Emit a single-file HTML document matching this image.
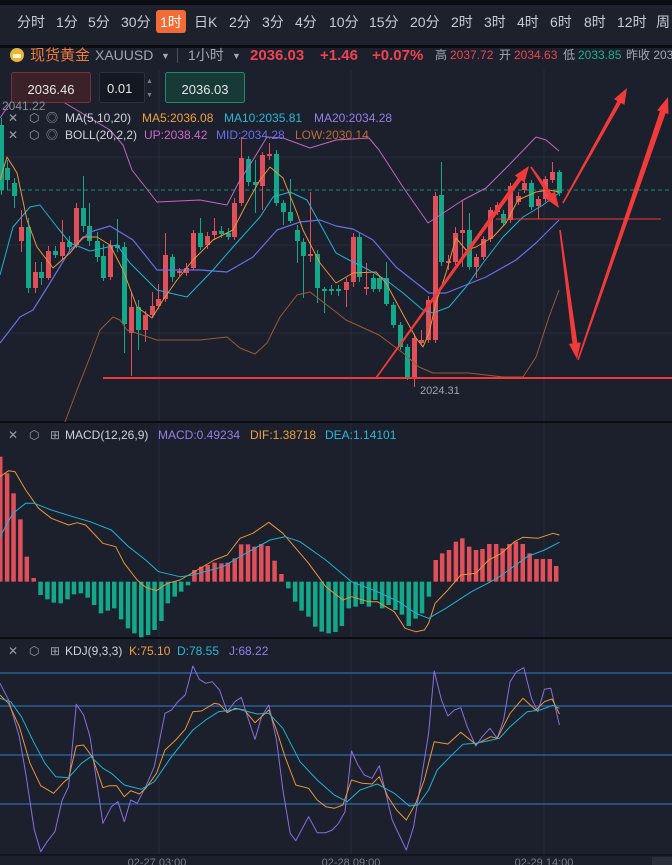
<!DOCTYPE html>
<html><head><meta charset="utf-8">
<style>
html,body{margin:0;padding:0;background:#1b202c;width:672px;height:865px;overflow:hidden;font-family:"Liberation Sans","Noto Sans CJK SC",sans-serif;}
svg{position:absolute;left:0;top:0}
</style></head>
<body>
<svg id="s" width="672" height="865" xmlns="http://www.w3.org/2000/svg" font-family="Liberation Sans, Noto Sans CJK SC, sans-serif">
<rect x="0" y="0" width="672" height="865" fill="#1b202c"/>
<rect x="0" y="0" width="672" height="5" fill="#0b0d12"/>
<rect x="0" y="5" width="672" height="41" fill="#1c212b"/>
<rect x="0" y="45" width="672" height="3" fill="#0b0d12"/>
<rect x="156" y="10" width="30" height="23" rx="3" fill="#f26b36"/>
<g font-size="14" fill="#c9ccd3">
<text x="17" y="27">分时</text><text x="56" y="27">1分</text><text x="88" y="27">5分</text><text x="121" y="27">30分</text>
<text x="160" y="27" fill="#fff">1时</text><text x="194" y="27">日K</text><text x="229" y="27">2分</text><text x="262" y="27">3分</text>
<text x="295" y="27">4分</text><text x="329" y="27">10分</text><text x="369" y="27">15分</text><text x="410" y="27">20分</text>
<text x="451" y="27">2时</text><text x="484" y="27">3时</text><text x="517" y="27">4时</text><text x="550" y="27">6时</text>
<text x="584" y="27">8时</text><text x="617" y="27">12时</text><text x="656" y="27">周</text>
</g>
<circle cx="17" cy="55" r="7" fill="#e8b63a"/><rect x="13" y="54" width="8" height="4" fill="#fff3c8"/>
<text x="30" y="60" font-size="15" fill="#f07a3a">现货黄金</text>
<text x="95" y="60" font-size="14" fill="#a3a7b0">XAUUSD</text>
<text x="161" y="59" font-size="9" fill="#a3a7b0">▼</text>
<rect x="177" y="48" width="1" height="15" fill="#4a4f5a"/>
<text x="188" y="60" font-size="14" fill="#a3a7b0">1小时</text>
<text x="232" y="59" font-size="9" fill="#a3a7b0">▼</text>
<g font-size="15" font-weight="bold" fill="#ef4450">
<text x="250" y="60">2036.03</text><text x="320" y="60">+1.46</text><text x="372" y="60">+0.07%</text></g>
<g font-size="12"><text x="435" y="59" fill="#a3a7b0">高</text><text x="450" y="59" fill="#ef4450">2037.72</text>
<text x="499" y="59" fill="#a3a7b0">开</text><text x="514" y="59" fill="#ef4450">2034.63</text>
<text x="563" y="59" fill="#a3a7b0">低</text><text x="578" y="59" fill="#1fb08a">2033.85</text>
<text x="626" y="59" fill="#a3a7b0">昨收 203</text></g>
<g id="grid" stroke="#262d3a" stroke-width="1">
<line x1="159" y1="70" x2="159" y2="855"/><line x1="351" y1="70" x2="351" y2="855"/><line x1="544" y1="70" x2="544" y2="855"/>
<line x1="0" y1="157" x2="672" y2="157"/><line x1="0" y1="245" x2="672" y2="245"/><line x1="0" y1="333" x2="672" y2="333"/>
</g>
<line x1="0" y1="422" x2="672" y2="422" stroke="#0b0d12" stroke-width="2"/>
<line x1="0" y1="638" x2="672" y2="638" stroke="#0b0d12" stroke-width="2"/>
<line x1="0" y1="190" x2="672" y2="190" stroke="#1a8f78" stroke-width="1" stroke-dasharray="4,3"/>
<g id="dyn"></g>
<!-- price boxes -->
<rect x="11.5" y="72.5" width="79" height="30" rx="2" fill="#3a2228" stroke="#7a3038"/>
<text x="51" y="94" font-size="13" fill="#e6e6e6" text-anchor="middle">2036.46</text>
<rect x="99.5" y="72.5" width="45" height="30" rx="2" fill="#131821" stroke="#2a303c"/>
<text x="107" y="93" font-size="13" fill="#e6e6e6">0.01</text>
<text x="146" y="83" font-size="7" fill="#7a7f88">▲</text><text x="146" y="97" font-size="7" fill="#7a7f88">▼</text>
<rect x="165.5" y="72.5" width="79" height="30" rx="2" fill="#173a36" stroke="#1d8a74"/>
<text x="205" y="94" font-size="13" fill="#e6e6e6" text-anchor="middle">2036.03</text>
<text x="2" y="110" font-size="12" fill="#8a8f98">2041.22</text>
<text x="420" y="394" font-size="11" fill="#a0a4ac">2024.31</text>
<g font-size="12">
<text x="8" y="122" fill="#9aa0a8">✕</text><text x="29" y="122" fill="#9aa0a8">⬡</text><text x="46" y="122" fill="#9aa0a8">◎</text>
<text x="65" y="122" fill="#d0d3d8">MA(5,10,20)</text><text x="142" y="122" fill="#f0a040">MA5:2036.08</text>
<text x="224" y="122" fill="#2ab8d8">MA10:2035.81</text><text x="314" y="122" fill="#9a7ee8">MA20:2034.28</text>
<text x="8" y="139" fill="#9aa0a8">✕</text><text x="29" y="139" fill="#9aa0a8">⬡</text><text x="46" y="139" fill="#9aa0a8">◎</text>
<text x="65" y="139" fill="#d0d3d8">BOLL(20,2,2)</text><text x="144" y="139" fill="#d068c8">UP:2038.42</text>
<text x="216" y="139" fill="#6a6ee8">MID:2034.28</text><text x="295" y="139" fill="#c06a3a">LOW:2030.14</text>
<text x="8" y="439" fill="#9aa0a8">✕</text><text x="29" y="439" fill="#9aa0a8">⬡</text><text x="50" y="439" fill="#9aa0a8">⊞</text>
<text x="65" y="439" fill="#d0d3d8">MACD(12,26,9)</text><text x="158" y="439" fill="#9a7ee8">MACD:0.49234</text>
<text x="250" y="439" fill="#f0a040">DIF:1.38718</text><text x="325" y="439" fill="#2ab8d8">DEA:1.14101</text>
<text x="8" y="655" fill="#9aa0a8">✕</text><text x="29" y="655" fill="#9aa0a8">⬡</text><text x="50" y="655" fill="#9aa0a8">⊞</text>
<text x="65" y="655" fill="#d0d3d8">KDJ(9,3,3)</text><text x="129" y="655" fill="#f0a040">K:75.10</text>
<text x="177" y="655" fill="#2ab8d8">D:78.55</text><text x="229" y="655" fill="#9a7ee8">J:68.22</text>
</g>
<line x1="0" y1="855" x2="672" y2="855" stroke="#0b0d12" stroke-width="1"/>
<g font-size="11" fill="#7a7f88" text-anchor="middle">
<text x="157" y="866">02-27 03:00</text><text x="351" y="866">02-28 09:00</text><text x="544" y="866">02-29 14:00</text></g>
<rect x="652" y="857" width="20" height="8" fill="#2a2f3a"/>
</svg>
<script>
var NS="http://www.w3.org/2000/svg",g=document.getElementById("dyn");
function el(t,a){var e=document.createElementNS(NS,t);for(var k in a)e.setAttribute(k,a[k]);g.appendChild(e);return e;}
function pl(pts,c,w,sx,sy,ox,oy){var s=pts.map(function(p){return (p[0]*sx+ox).toFixed(1)+","+(p[1]*sy+oy).toFixed(1)}).join(" ");el("polyline",{points:s,fill:"none",stroke:c,"stroke-width":w||1,"stroke-linejoin":"round"});}
var R="#e0505a",G="#13a88a";
// KDJ horizontal lines
[673,706,755,804].forEach(function(y){el("line",{x1:0,y1:y,x2:672,y2:y,stroke:"#2b5f95","stroke-width":1.5});});
// candles [x,top,bottom,wickTop,wickBot,color]
var C=[[1,125,190,118,195,G],[7,168,180,160,190,G],[14,183,196,178,208,G],[21,227,241,210,252,R],[28,227,288,218,293,G],[35,272,288,262,293,R],[41,272,278,262,285,G],[48,251,278,246,280,R],[55,251,255,246,258,G],[62,242,256,220,260,R],[69,242,247,236,252,G],[76,208,245,203,248,R],[83,208,226,176,232,G],[89,226,241,203,246,G],[97,241,257,232,262,G],[103,256,278,244,281,G],[110,245,277,240,280,R],[117,245,248,219,252,G],[124,247,324,242,353,G],[131,307,333,292,376,R],[138,307,330,300,350,G],[145,315,330,311,342,R],[152,306,315,292,318,R],[158,299,306,284,309,R],[165,255,299,233,302,R],[172,257,277,254,282,G],[179,271,273,268,276,R],[186,268,273,263,276,R],[193,233,268,230,270,R],[200,233,247,218,250,G],[207,236,245,232,249,R],[214,231,235,218,240,R],[221,231,234,226,238,G],[228,233,237,228,240,G],[234,203,237,198,240,R],[241,158,203,137,206,R],[248,159,182,156,186,G],[255,182,185,160,213,G],[262,155,186,152,210,R],[269,154,156,143,160,R],[276,154,203,150,206,G],[283,203,212,200,225,G],[290,212,221,179,223,G],[297,230,241,225,263,G],[303,242,256,238,298,G],[310,254,256,192,262,R],[317,254,288,250,303,G],[324,289,291,287,313,G],[331,289,291,285,295,G],[338,289,291,285,296,G],[346,282,290,278,307,R],[353,237,282,233,287,R],[359,237,277,233,282,G],[366,287,289,263,295,R],[373,278,289,274,292,G],[379,278,289,276,292,G],[386,278,304,262,306,G],[393,305,325,302,328,G],[400,325,347,322,350,G],[407,347,379,344,380,G],[414,338,379,334,387,R],[421,340,343,330,346,R],[428,300,340,296,343,R],[435,196,340,192,343,R],[441,195,262,162,266,G],[448,261,263,255,270,R],[455,233,262,227,265,R],[462,230,233,200,267,R],[469,230,267,213,270,G],[476,257,267,254,278,R],[483,239,257,236,260,R],[490,210,239,207,242,R],[497,205,212,202,215,R],[503,214,223,210,226,G],[510,186,220,183,223,R],[518,196,202,192,205,R],[524,183,190,180,193,R],[531,183,207,180,210,G],[538,199,206,196,219,R],[545,179,199,176,202,R],[552,172,180,162,183,R],[559,172,193,170,196,G]];
C.forEach(function(c){el("line",{x1:c[0]+0.5,y1:c[3],x2:c[0]+0.5,y2:c[4],stroke:c[5],"stroke-width":1});el("rect",{x:c[0]-2,y:c[1],width:5,height:Math.max(1,c[2]-c[1]),fill:c[5]});});
// BOLL / MA
pl([[0,118],[15,96],[45,92],[60,100],[90,118],[110,130],[123,145],[132,170],[157,202],[200,200],[227,205],[240,180],[253,160],[267,137],[283,138],[310,148],[336,140],[369,138],[379,150],[403,187],[428,223],[463,200],[486,188],[509,165],[536,137],[546,140],[559,151]],"#c266c2",1,1,1,0,0);
pl([[0,343],[20,317],[33,310],[50,283],[70,250],[90,232],[110,226],[133,240],[157,270],[200,270],[227,272],[253,257],[277,230],[300,222],[320,220],[336,226],[353,229],[373,240],[396,267],[429,293],[446,293],[486,277],[516,260],[536,243],[559,220]],"#6a6ee8",1.2,1,1,0,0);
pl([[65,422],[77,390],[90,357],[100,330],[113,317],[120,320],[127,330],[157,340],[200,340],[227,337],[240,348],[255,354],[267,343],[280,317],[297,295],[310,292],[336,312],[346,320],[379,335],[403,353],[419,367],[433,373],[469,373],[503,377],[523,377],[536,357],[549,317],[559,290]],"#9a5a36",1,1,1,0,0);
pl([[0,275],[13,227],[30,207],[40,205],[57,227],[70,243],[90,251],[117,245],[130,263],[157,290],[187,297],[213,270],[233,247],[260,217],[273,197],[290,192],[307,200],[336,253],[349,260],[369,270],[386,280],[403,293],[423,310],[433,313],[449,307],[466,287],[483,263],[503,237],[523,217],[543,205],[559,193]],"#1fb3d4",1,1,1,0,0);
pl([[0,180],[7,157],[17,173],[27,220],[37,247],[53,268],[70,253],[83,237],[97,237],[110,245],[123,270],[137,307],[152,318],[163,300],[177,280],[193,260],[213,240],[233,230],[247,203],[260,180],[270,167],[283,178],[297,213],[303,230],[320,263],[336,283],[353,273],[376,272],[386,283],[399,307],[416,338],[423,347],[429,333],[436,303],[446,273],[456,238],[466,250],[476,247],[493,237],[506,223],[518,200],[536,192],[549,190],[559,192]],"#e8963a",1,1,1,0,0);
// annotations
el("line",{x1:103,y1:378,x2:672,y2:378,stroke:"#f03a3a","stroke-width":2});
el("line",{x1:496,y1:219,x2:661,y2:219,stroke:"#f03a3a","stroke-width":1});
function arrow(x1,y1,x2,y2,w){var dx=x2-x1,dy=y2-y1,L=Math.sqrt(dx*dx+dy*dy),ux=dx/L,uy=dy/L,px=-uy,py=ux,h=16,hw=6;
var bx=x2-ux*h,by=y2-uy*h;
el("polygon",{points:[x1+px*0.8,y1+py*0.8,bx+px*w,by+py*w,bx+px*hw,by+py*hw,x2,y2,bx-px*hw,by-py*hw,bx-px*w,by-py*w,x1-px*0.8,y1-py*0.8].join(","),fill:"#f23a3a"});}
arrow(376,378,529,166,2.2);arrow(531,167,559,208,2.2);arrow(560,230,577,359,2.5);arrow(578,360,668,97,3);arrow(563,203,627,88,2);
// MACD
var H=[[0,110],[16,160],[31,220],[47,298],[62,410],[78,474],[94,525],[110,538],[125,548],[141,550],[157,538],[172,523],[188,520],[204,533],[219,555],[235,580],[251,572],[266,565],[282,598],[298,625],[313,640],[329,652],[345,645],[360,630],[376,603],[391,550],[407,530],[422,515],[438,496],[453,450],[469,440],[484,435],[500,428],[516,430],[531,428],[547,415],[562,373],[578,373],[593,380],[609,372],[624,378],[640,422],[656,462],[672,505],[688,545],[703,572],[719,590],[735,620],[750,635],[766,640],[782,636],[797,618],[813,565],[829,560],[844,552],[860,560],[875,540],[891,565],[906,555],[922,570],[937,584],[953,618],[969,596],[984,580],[1000,530],[1016,420],[1031,400],[1047,390],[1063,365],[1078,355],[1094,380],[1110,390],[1125,387],[1141,372],[1157,372],[1172,385],[1188,372],[1203,365],[1219,372],[1235,400],[1251,417],[1266,417],[1282,417],[1297,438]];
H.forEach(function(h){var x=h[0]/2.333,y=420+h[1]/3,z=420+485/3;el("rect",{x:x-2,y:Math.min(y,z),width:4.5,height:Math.max(1,Math.abs(y-z)),fill:y<z?R:G});});
var sx=1/2.333,sy=1/3;
pl([[0,170],[20,152],[35,155],[60,210],[90,265],[120,295],[160,315],[180,308],[200,315],[240,370],[270,380],[290,430],[320,480],[340,502],[365,512],[390,490],[420,480],[460,450],[500,420],[530,405],[560,355],[590,340],[627,307],[660,340],[690,385],[720,430],[760,500],[800,540],[820,530],[860,545],[880,545],[920,575],[945,625],[970,635],[990,630],[1000,610],[1015,550],[1045,510],[1075,465],[1110,460],[1140,420],[1170,400],[1200,365],[1220,352],[1255,355],[1290,340],[1305,345]],"#e8963a",1,sx,sy,0,420);
pl([[0,350],[30,280],[60,250],[80,250],[120,270],[170,290],[210,305],[260,330],[300,380],[340,420],[370,455],[420,470],[450,465],[520,440],[580,395],[630,360],[665,350],[700,365],[760,420],[820,485],[880,515],[930,545],[970,580],[1000,595],[1040,565],[1100,515],[1160,475],[1230,410],[1270,390],[1305,367]],"#1fb3d4",1,sx,sy,0,420);
// KDJ
pl([[0,130],[20,180],[45,290],[60,400],[80,570],[95,635],[110,605],[128,575],[145,480],[160,440],[178,193],[195,225],[210,290],[225,420],[240,550],[260,500],[275,485],[290,545],[305,480],[320,490],[340,440],[360,380],[385,220],[400,210],[415,185],[432,165],[450,78],[465,118],[480,130],[495,125],[512,150],[530,215],[548,185],[563,172],[580,240],[595,298],[610,230],[627,195],[645,300],[660,450],[677,580],[690,602],[720,530],[740,578],[760,578],[775,570],[790,550],[805,515],[820,333],[835,375],[850,405],[868,415],[885,377],[900,460],[915,540],[948,630],[965,560],[980,440],[1000,280],[1013,93],[1030,180],[1045,228],[1060,210],[1075,203],[1090,260],[1110,318],[1125,290],[1143,265],[1160,295],[1175,240],[1190,125],[1205,95],[1222,83],[1240,175],[1255,215],[1270,148],[1285,145],[1305,255]],"#8a6ee0",1,sx,sy,0,640);
pl([[0,165],[20,190],[45,260],[70,370],[95,437],[125,460],[150,425],[160,415],[178,318],[195,315],[215,350],[240,443],[255,437],[272,437],[290,470],[305,452],[325,462],[340,445],[365,400],[385,330],[410,300],[432,268],[450,215],[470,213],[500,190],[512,193],[530,218],[548,205],[570,210],[595,248],[627,210],[645,270],[665,350],[690,435],[720,445],[740,480],[760,500],[780,505],[800,495],[820,420],[845,430],[868,432],[885,410],[905,470],[925,510],[948,540],[970,490],[990,420],[1013,305],[1045,312],[1075,277],[1110,313],[1145,290],[1160,295],[1190,220],[1220,175],[1250,210],[1270,185],[1288,177],[1305,222]],"#e8963a",1,sx,sy,0,640);
pl([[0,175],[25,185],[50,230],[80,310],[105,370],[130,410],[160,413],[190,370],[212,350],[240,385],[260,400],[290,435],[330,448],[360,425],[400,350],[450,270],[480,240],[510,215],[555,207],[600,222],[627,220],[660,265],[700,365],[740,420],[780,465],[810,485],[840,450],[880,432],[920,460],[955,498],[975,495],[1000,450],[1020,390],[1050,350],[1080,313],[1110,310],[1140,302],[1165,295],[1190,260],[1230,215],[1260,210],[1290,196],[1305,205]],"#1fb3d4",1,sx,sy,0,640);
</script>
</body></html>
